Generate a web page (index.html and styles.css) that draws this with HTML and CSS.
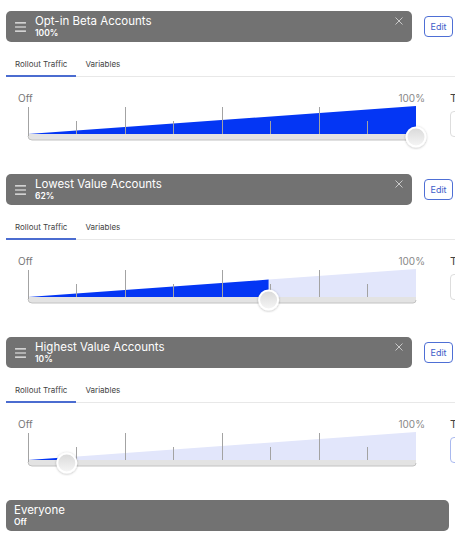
FILE: index.html
```html
<!DOCTYPE html>
<html>
<head>
<meta charset="utf-8">
<link rel="stylesheet" href="styles.css">
</head>
<body>
<div class="page">
  <svg width="0" height="0" class="defs">
    <defs>
      <linearGradient id="thumbg" x1="0" y1="0" x2="0" y2="1">
        <stop offset="0" stop-color="#d9d9d9"/>
        <stop offset="1" stop-color="#f6f6f6"/>
      </linearGradient>
      <filter id="sh" x="-50%" y="-50%" width="200%" height="200%">
        <feDropShadow dx="0" dy="0.5" stdDeviation="0.8" flood-color="#000" flood-opacity="0.3"/>
      </filter>
    </defs>
  </svg>

  <section class="rule">
    <div class="rule-top">
      <div class="bar">
        <svg class="burger" viewBox="0 0 12 11"><path d="M0 1h12M0 5.5h12M0 10h12" stroke="#f2f2f2" stroke-width="1.3"/></svg>
        <div class="bar-text"><div class="bar-title">Opt-in Beta Accounts</div><div class="bar-sub">100%</div></div>
        <svg class="close" viewBox="0 0 8 8"><path d="M0.5 0.5L7.5 7.5M7.5 0.5L0.5 7.5" stroke="#c9c9c9" stroke-width="1"/></svg>
      </div>
      <button class="edit">Edit</button>
    </div>
    <div class="tabs"><span class="tab active">Rollout Traffic</span><span class="tab">Variables</span></div>
    <div class="traffic">
      <div class="slider">
        <div class="labels"><span>Off</span><span class="max">100%</span></div>
        <svg class="track" viewBox="0 0 412 46" width="412" height="46">
          <path d="M10 30H398V33Q398 36 395 36H14Q10 36 10 32Z" fill="#e3e3e3"/>
          <path d="M10 32Q10 36 14 36H395Q398 36 398 33" fill="none" stroke="#c2c2c2" stroke-width="1"/>
          <polygon points="10,30 398,2 398,30" fill="#0436f4"/>
          <g stroke="#a3a3a3" stroke-width="1">
            <path d="M10.5 3V32M107.5 3V30M204.5 3V30M301.5 3V30M58.5 17V30M155.5 17V30M252.5 17V30M349.5 17V30"/>
          </g>
          <g filter="url(#sh)"><circle cx="398" cy="33" r="9.5" fill="url(#thumbg)" stroke="#fff" stroke-width="2"/></g>
        </svg>
      </div>
      <div class="side"><div class="side-label">T</div><div class="side-input"></div></div>
    </div>
  </section>

  <section class="rule">
    <div class="rule-top">
      <div class="bar">
        <svg class="burger" viewBox="0 0 12 11"><path d="M0 1h12M0 5.5h12M0 10h12" stroke="#f2f2f2" stroke-width="1.3"/></svg>
        <div class="bar-text"><div class="bar-title">Lowest Value Accounts</div><div class="bar-sub">62%</div></div>
        <svg class="close" viewBox="0 0 8 8"><path d="M0.5 0.5L7.5 7.5M7.5 0.5L0.5 7.5" stroke="#c9c9c9" stroke-width="1"/></svg>
      </div>
      <button class="edit">Edit</button>
    </div>
    <div class="tabs"><span class="tab active">Rollout Traffic</span><span class="tab">Variables</span></div>
    <div class="traffic">
      <div class="slider">
        <div class="labels"><span>Off</span><span class="max">100%</span></div>
        <svg class="track" viewBox="0 0 412 46" width="412" height="46">
          <path d="M10 30H398V33Q398 36 395 36H14Q10 36 10 32Z" fill="#e3e3e3"/>
          <path d="M10 32Q10 36 14 36H395Q398 36 398 33" fill="none" stroke="#c2c2c2" stroke-width="1"/>
          <polygon points="250.6,12.6 398,2 398,30 250.6,30" fill="#e2e6fb"/>
          <polygon points="10,30 250.6,12.6 250.6,30" fill="#0436f4"/>
          <g stroke="#a3a3a3" stroke-width="1">
            <path d="M10.5 3V32M107.5 3V30M204.5 3V30M301.5 3V30M58.5 17V30M155.5 17V30M252.5 17V30M349.5 17V30"/>
          </g>
          <g filter="url(#sh)"><circle cx="250.6" cy="33" r="9.5" fill="url(#thumbg)" stroke="#fff" stroke-width="2"/></g>
        </svg>
      </div>
      <div class="side"><div class="side-label">T</div><div class="side-input"></div></div>
    </div>
  </section>

  <section class="rule">
    <div class="rule-top">
      <div class="bar">
        <svg class="burger" viewBox="0 0 12 11"><path d="M0 1h12M0 5.5h12M0 10h12" stroke="#f2f2f2" stroke-width="1.3"/></svg>
        <div class="bar-text"><div class="bar-title">Highest Value Accounts</div><div class="bar-sub">10%</div></div>
        <svg class="close" viewBox="0 0 8 8"><path d="M0.5 0.5L7.5 7.5M7.5 0.5L0.5 7.5" stroke="#c9c9c9" stroke-width="1"/></svg>
      </div>
      <button class="edit">Edit</button>
    </div>
    <div class="tabs"><span class="tab active">Rollout Traffic</span><span class="tab">Variables</span></div>
    <div class="traffic">
      <div class="slider">
        <div class="labels"><span>Off</span><span class="max">100%</span></div>
        <svg class="track" viewBox="0 0 412 46" width="412" height="46">
          <path d="M10 30H398V33Q398 36 395 36H14Q10 36 10 32Z" fill="#e3e3e3"/>
          <path d="M10 32Q10 36 14 36H395Q398 36 398 33" fill="none" stroke="#c2c2c2" stroke-width="1"/>
          <polygon points="48.8,27.2 398,2 398,30 48.8,30" fill="#e2e6fb"/>
          <polygon points="10,30 48.8,27.2 48.8,30" fill="#0436f4"/>
          <g stroke="#a3a3a3" stroke-width="1">
            <path d="M10.5 3V32M107.5 3V30M204.5 3V30M301.5 3V30M58.5 17V30M155.5 17V30M252.5 17V30M349.5 17V30"/>
          </g>
          <g filter="url(#sh)"><circle cx="48.8" cy="33" r="9.5" fill="url(#thumbg)" stroke="#fff" stroke-width="2"/></g>
        </svg>
      </div>
      <div class="side"><div class="side-label">T</div><div class="side-input focus"></div></div>
    </div>
  </section>

  <section class="rule last">
    <div class="rule-top">
      <div class="bar wide">
        <div class="bar-text"><div class="bar-title">Everyone</div><div class="bar-sub">Off</div></div>
      </div>
    </div>
  </section>
</div>
</body>
</html>
```
FILE: styles.css
```css
html, body {
  margin: 0;
  background: #fff;
}
body {
  font-family: Inter, "Noto Sans", sans-serif;
  overflow: hidden;
}
.defs {
  position: absolute;
}
.page {
  width: 455px;
  height: 535px;
  overflow: hidden;
  box-sizing: border-box;
  padding: 11px 0 0 6px;
}
.rule {
  height: 163px;
}
.rule-top {
  display: flex;
  align-items: center;
}
.bar {
  width: 406px;
  height: 31px;
  box-sizing: border-box;
  background: #727272;
  border-radius: 5px;
  display: flex;
  align-items: center;
  padding: 0 9px 0 9px;
  color: #fff;
}
.bar.wide {
  width: 443px;
  padding-left: 8px;
}
.burger {
  width: 11px;
  height: 10px;
  margin-right: 9px;
}
.bar-text {
  flex: 1;
  display: flex;
  flex-direction: column;
}
.bar-title {
  font-size: 11.5px;
  line-height: 13px;
}
.bar-sub {
  font-size: 8.5px;
  font-weight: 600;
  line-height: 10px;
}
.close {
  width: 8px;
  height: 8px;
  align-self: flex-start;
  margin-top: 6px;
}
.edit {
  margin-left: 12px;
  width: 29px;
  height: 21px;
  box-sizing: border-box;
  border: 1px solid #4e6fd5;
  border-radius: 4px;
  background: #fff;
  color: #3d5ec9;
  font-family: Inter, "Noto Sans", sans-serif;
  font-size: 9px;
  padding: 0;
}
.tabs {
  margin-top: 10px;
  display: flex;
  width: 460px;
  border-bottom: 1px solid #e8e8e8;
}
.tab {
  padding: 0 9px;
  height: 24px;
  line-height: 24px;
  font-size: 8px;
  color: #444;
}
.tab.active {
  border-bottom: 2px solid #4b6cd0;
  margin-bottom: -1px;
  height: 23px;
}
.traffic {
  display: flex;
  padding-top: 15px;
}
.slider {
  margin-left: 12px;
  width: 412px;
}
.labels {
  display: flex;
  justify-content: space-between;
  width: 407px;
  font-size: 10px;
  line-height: 12px;
  color: #777;
}
.labels .max {
  color: #888;
}
.track {
  display: block;
}
.side {
  margin-left: 20px;
}
.side-label {
  font-size: 11px;
  line-height: 12px;
  color: #444;
}
.side-input {
  margin-top: 7px;
  width: 60px;
  height: 26px;
  box-sizing: border-box;
  border: 1px solid #ddd;
  border-radius: 4px;
}
.side-input.focus {
  border-color: #a9b9ef;
}
```
